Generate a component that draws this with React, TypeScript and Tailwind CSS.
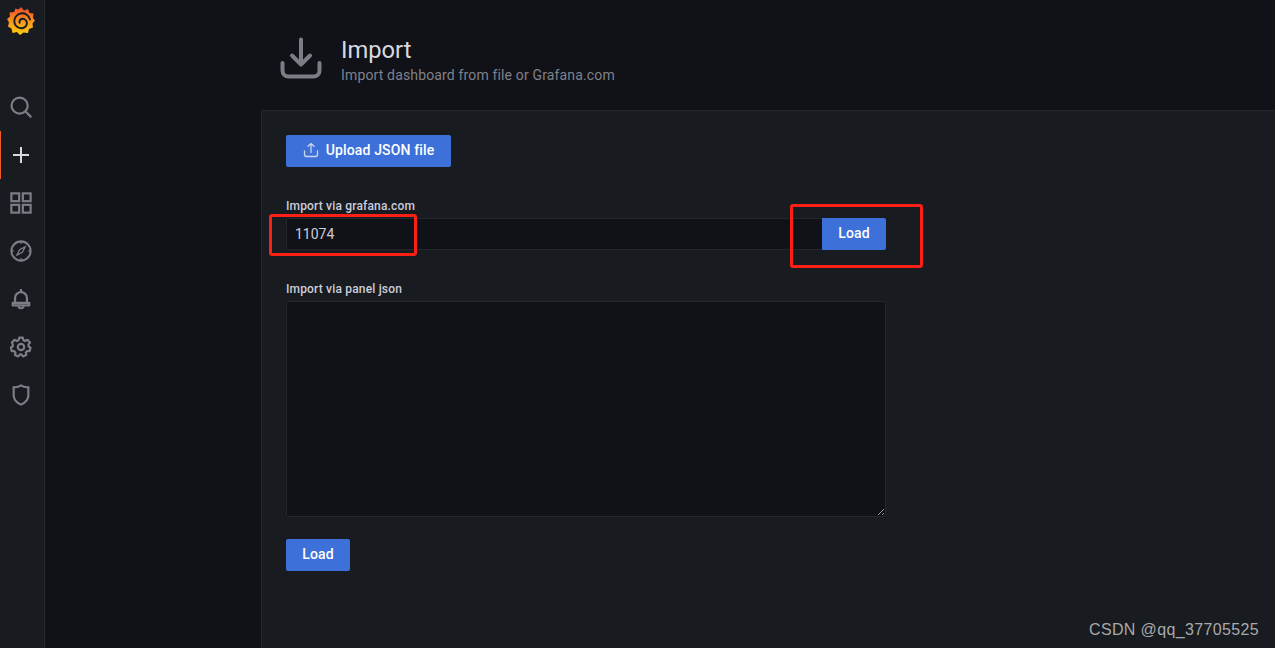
import React from 'react';

const iconClass = 'w-[22px] h-[22px]';

const SearchIcon = () => (
  <svg className={iconClass} viewBox="0 0 24 24" fill="none" stroke="#7b7d87" strokeWidth={2.4}>
    <circle cx="10.5" cy="10.5" r="8.800" />
    <path strokeLinecap="round" d="M17 17l5.500 5.500" />
  </svg>
);

const PlusIcon = () => (
  <svg className="w-[24px] h-[24px]" viewBox="0 0 24 24" fill="none" stroke="#d8d9e0" strokeWidth={2}>
    <path d="M12 4v16M4 12h16" />
  </svg>
);

const AppsIcon = () => (
  <svg className={iconClass} viewBox="0 0 24 24" fill="none" stroke="#7b7d87" strokeWidth={2.4}>
    <rect x="1.500" y="1.500" width="8.500" height="8.500" />
    <rect x="14" y="1.500" width="8.500" height="8.500" />
    <rect x="1.500" y="14" width="8.500" height="8.500" />
    <rect x="14" y="14" width="8.500" height="8.500" />
  </svg>
);

const CompassIcon = () => (
  <svg className={iconClass} viewBox="0 0 24 24" fill="none" stroke="#7b7d87" strokeWidth={2.2}>
    <circle cx="12" cy="12" r="10.500" />
    <path d="M12 1.500v2.500M12 20v2.500M1.500 12H4M20 12h2.500" strokeWidth={1.6} />
    <path d="M16.500 7.500l-6 3-3 6 6-3z" strokeWidth={1.4} />
  </svg>
);

const BellIcon = () => (
  <svg className={iconClass} viewBox="0 0 24 24" fill="none" stroke="#7b7d87" strokeWidth={2.4}>
    <path strokeLinejoin="round" d="M5.500 16v-5a6.500 6.500 0 0 1 13 0v5" />
    <path strokeLinejoin="round" d="M3 16.200h18v2.800H3z" />
    <path d="M12 1v3.500M9 20a3.200 3.200 0 0 0 6 0" />
  </svg>
);

const CogIcon = () => (
  <svg className={iconClass} viewBox="0 0 24 24" fill="none" stroke="#7b7d87" strokeWidth={2.4}>
    <path strokeLinejoin="round" d="M10 1.800h4l.6 2.800 1.900.9 2.500-1.400 2.800 3-1.700 2.300.2 2 2.100 1.300-1.100 3.800-2.900.1-1.200 1.500.6 2.600-3.700 1.600-1.700-2.200h-1.600l-1.700 2.200-3.700-1.600.6-2.600-1.200-1.500-2.900-.1-1.100-3.800 2.100-1.300.2-2L2.100 7.100l2.800-3 2.500 1.400 1.900-.9z" />
    <circle cx="12" cy="12" r="3.500" />
  </svg>
);

const ShieldIcon = () => (
  <svg className={iconClass} viewBox="0 0 24 24" fill="none" stroke="#7b7d87" strokeWidth={2.4}>
    <path strokeLinejoin="round" d="M12 1.500c2.200 1.600 4.800 2.300 8 2v9c0 4.500-3.300 7.700-8 10-4.700-2.300-8-5.500-8-10v-9c3.200.3 5.800-.4 8-2z" />
  </svg>
);

const GrafanaLogo = () => (
  <svg className="w-[28px] h-[30px]" viewBox="0 0 28 30">
    <defs>
      <linearGradient id="logoGrad" x1="0" y1="1" x2="0" y2="0">
        <stop offset="0" stopColor="#fcd00f" />
        <stop offset="0.5" stopColor="#f7931e" />
        <stop offset="1" stopColor="#ee4a2c" />
      </linearGradient>
    </defs>
    <path
      fill="url(#logoGrad)"
      d="M14 1l3 3.500 4-1.500 1.500 4 4 .5-.5 4.500 2 2.500-2.500 3 .5 4-4 1.500-1 4-4.500-.5L13 29l-3-3-4.500 1-1-4.500-3.500-2 1-4L0 13l3-2.500L2.500 6.500l4.500-.5 1.500-3.500 3 1z"
    />
    <path
      fill="none"
      stroke="#181b1f"
      strokeWidth={1.9}
      strokeLinecap="round"
      d="M23 13.500c-1-4.500-5.500-7-9.500-6-4.500 1-7 5.500-6 9.500 1 3.800 5 6 8.500 5 3-.8 4.500-3.800 3.700-6.300-.7-2.200-3-3.500-5.200-2.700-1.700.6-2.400 2.400-1.900 3.800"
    />
  </svg>
);

const UploadIcon = () => (
  <svg className="w-[16px] h-[16px]" viewBox="0 0 16 16" fill="none" stroke="#ccd5ee" strokeWidth={1.3} strokeLinecap="round" strokeLinejoin="round">
    <path d="M8 10.500V1.500M5 4.300l3-2.800 3 2.800" />
    <path d="M1.500 9v3.500a2 2 0 0 0 2 2h9a2 2 0 0 0 2-2V9" />
  </svg>
);

const ImportIcon = () => (
  <svg className="w-[42px] h-[42px]" viewBox="0 0 42 42" fill="none" stroke="#7b7d87" strokeWidth={4} strokeLinecap="round" strokeLinejoin="round">
    <path d="M21 2.500v25M12 18.500l9 9 9-9" />
    <path d="M2.500 26v7.500a6 6 0 0 0 6 6h25a6 6 0 0 0 6-6V26" />
  </svg>
);

const navItems = [
  { icon: <SearchIcon /> },
  { icon: <PlusIcon />, active: true },
  { icon: <AppsIcon /> },
  { icon: <CompassIcon /> },
  { icon: <BellIcon /> },
  { icon: <CogIcon /> },
  { icon: <ShieldIcon /> },
];

const blueBtn = 'bg-[#3d71d9] text-white font-medium text-[14px] tracking-[0.15px] rounded-[2px] flex items-center justify-center pb-[2px]';
const labelClass = 'text-[12px] leading-[15px] font-medium tracking-[0.17px] text-[#ccccdc] mb-[4px]';

const App = () => {
  return (
    <div className="relative flex w-[1275px] h-[648px] overflow-hidden bg-[#111217] font-['Roboto',sans-serif]">
      {/* sidebar */}
      <div className="w-[45px] shrink-0 bg-[#181b1f] border-r border-[#24272c] flex flex-col">
        <div className="h-[83px] shrink-0 flex justify-center pt-[6px] pr-[3px]">
          <GrafanaLogo />
        </div>
        {navItems.map((item, i) => (
          <div key={i} className="relative h-[48px] flex items-center justify-center pr-[3px]">
            {item.active && <div className="absolute left-0 top-0 w-[1px] h-full bg-[#f05a28]" />}
            {item.icon}
          </div>
        ))}
      </div>

      {/* main */}
      <div className="flex-1 flex flex-col pl-[216px]">
        <div className="h-[110px] shrink-0 flex items-start pl-[19px] pt-[37px]">
          <ImportIcon />
          <div className="ml-[19px] -mt-[1px]">
            <div className="text-[23.7px] leading-[28px] text-[#d8d9e0]">Import</div>
            <div className="text-[14px] leading-[18px] mt-[2px] tracking-[0.15px] text-[#7f818b]">Import dashboard from file or Grafana.com</div>
          </div>
        </div>

        <div className="flex-1 bg-[#181b1f] border-t border-l border-[#24272c] pl-[24px] pt-[24px]">
          <button className={`${blueBtn} w-[165px] h-[32px] gap-[7px]`}>
            <UploadIcon />
            <span>Upload JSON file</span>
          </button>

          <div className={`${labelClass} mt-[32px]`}>Import via grafana.com</div>
          <div className="flex w-[600px] h-[32px]">
            <input
              readOnly
              value="11074"
              className="flex-1 min-w-0 bg-[#111217] border border-[#25272d] border-r-0 rounded-l-[2px] px-[8px] text-[14px] text-[#ccccdc] outline-none"
            />
            <button className={`${blueBtn} w-[64px] h-[32px] rounded-l-none`}>Load</button>
          </div>

          <div className={`${labelClass} mt-[32px]`}>Import via panel json</div>
          <textarea
            readOnly
            className="block w-[600px] h-[216px] bg-[#111217] border border-[#25272d] rounded-[2px] outline-none"
          />

          <button className={`${blueBtn} w-[64px] h-[32px] mt-[22px]`}>Load</button>
        </div>
      </div>

      {/* red annotations drawn over the screenshot */}
      <div className="absolute left-[269px] top-[214px] w-[148px] h-[42px] border-[3px] border-[#fb1f16] rounded-[3px]" />
      <div className="absolute left-[790px] top-[204px] w-[133px] h-[64px] border-[3px] border-[#fb1f16] rounded-[3px]" />

      {/* watermark */}
      <div className="absolute left-[1089px] top-[620px] text-[16px] leading-[20px] tracking-[0.36px] text-[#a8a9ab] font-['Liberation_Sans',sans-serif]">
        CSDN @qq_37705525
      </div>
    </div>
  );
};

export default App;
